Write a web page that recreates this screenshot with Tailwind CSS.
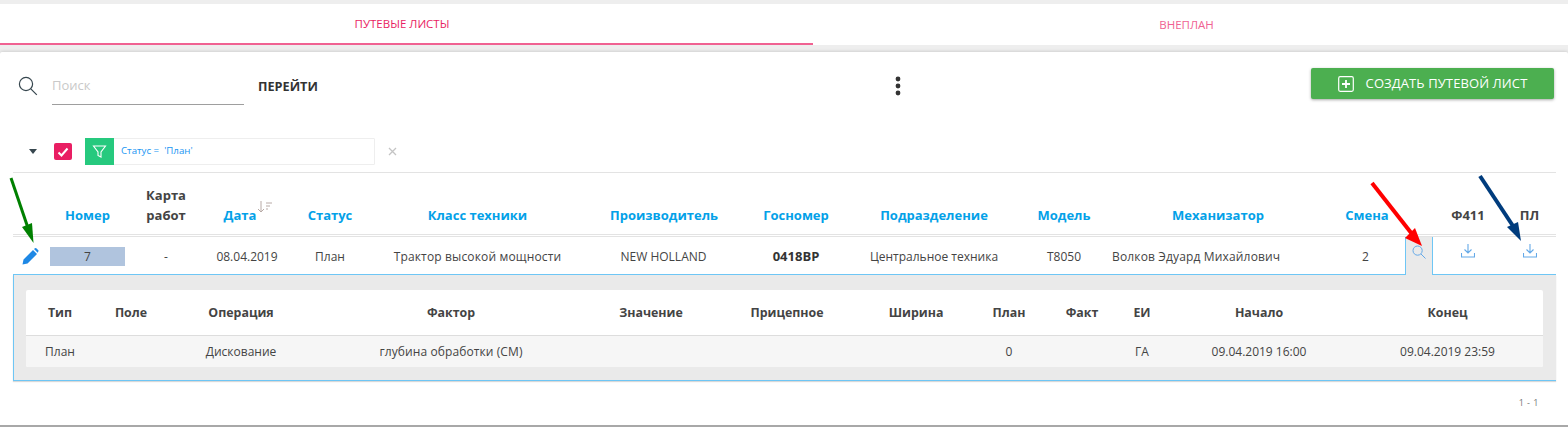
<!DOCTYPE html>
<html>
<head>
<meta charset="utf-8">
<script src="https://cdn.jsdelivr.net/npm/@tailwindcss/browser@4"></script>
</head>
<body class="bg-white">
<div class="relative h-[427px] w-[1568px] overflow-hidden bg-[#eeeeee] font-['Open_Sans',sans-serif] text-[12px] text-[#444444]">
  <div class="mt-[4px] flex h-[41px] bg-white text-[11.5px]">
    <div class="flex w-[813px] items-center justify-center border-b-2 border-[#f06292] pr-[9px] text-[#e91e63]">ПУТЕВЫЕ ЛИСТЫ</div>
    <div class="flex flex-1 items-center justify-center pr-[8px] pt-[1px] text-[#f06292]">ВНЕПЛАН</div>
  </div>
  <div class="mt-[7px] h-[375px] rounded-t-[2px] border-b-2 border-[#a8a8a8] bg-white pl-[13px] pr-[12px] shadow-[0_-1px_3px_rgba(0,0,0,0.12)]">
    <div class="flex h-[85px] items-start">
      <svg class="ml-[5px] mt-[24px] h-[20px] w-[20px]" viewBox="0 0 20 20" fill="none" stroke="#37474f" stroke-width="1.2"><circle cx="8" cy="8" r="6.6"/><path d="M12.8 12.8l6 6"/></svg>
      <div class="ml-[14px] mt-[16px] flex h-[37px] w-[192px] items-center border-b border-[#9e9e9e] pb-[1px] text-[13px] text-[#c9c9c9]">Поиск</div>
      <div class="ml-[14px] mt-[25px] w-[59px] whitespace-nowrap text-[12.7px] font-bold leading-[18px] text-[#333333]">ПЕРЕЙТИ</div>
      <svg class="ml-[578px] mt-[24px] h-[20px] w-[6px]" viewBox="0 0 6 20" fill="#333333"><circle cx="3" cy="3" r="2.4"/><circle cx="3" cy="10" r="2.4"/><circle cx="3" cy="17" r="2.4"/></svg>
      <div class="ml-[410px] mt-[16px] flex h-[31px] w-[243px] items-center justify-center gap-[12px] rounded-[2px] bg-[#4caf50] text-[13px] font-medium tracking-[0.1px] text-white shadow-[0_1px_3px_rgba(0,0,0,0.35)]">
        <svg class="h-[16px] w-[16px]" viewBox="0 0 16 16" fill="none" stroke="#ffffff"><rect x="0.7" y="0.7" width="14.6" height="14.6" rx="1.5" stroke-width="1.2"/><path d="M8 4v8M4 8h8" stroke-width="1.8"/></svg>
        <span>СОЗДАТЬ ПУТЕВОЙ ЛИСТ</span>
      </div>
    </div>
    <div class="flex h-[36px] items-center border-b border-[#e3e3e3] pb-[6px]">
      <div class="ml-[16px] h-0 w-0 border-x-[4px] border-t-[5px] border-x-transparent border-t-[#37474f]"></div>
      <div class="ml-[17px] flex h-[17px] w-[18px] items-center justify-center rounded-[2px] bg-[#e91e63]">
        <svg class="h-[12px] w-[12px]" viewBox="0 0 12 12" fill="none" stroke="#ffffff" stroke-width="2"><path d="M1.5 6.5l3 3 6-7"/></svg>
      </div>
      <div class="ml-[13px] flex h-[27px] w-[290px] items-center rounded-[1px] border border-[#eeeeee]">
        <div class="ml-[-1px] flex h-[27px] w-[29px] items-center justify-center bg-[#26c97e]">
          <svg class="h-[15px] w-[15px]" viewBox="0 0 15 15" fill="none" stroke="#ffffff" stroke-width="1.1"><path d="M1.5 2h12L9 8v5l-3-1.5V8z"/></svg>
        </div>
        <span class="ml-[7px] whitespace-pre text-[9.7px] text-[#2196f3]">Статус =  'План'</span>
      </div>
      <svg class="ml-[13px] h-[9px] w-[9px]" viewBox="0 0 9 9" stroke="#c4c4c4" stroke-width="1.3"><path d="M1 1l7 7M8 1l-7 7"/></svg>
    </div>
    <div class="grid h-[62px] grid-cols-[37px_75px_82px_80px_86px_209px_162px_104px_172px_88px_218px_79px_28px_70px_53px] items-end border-b border-[#e3e3e3] pb-[9px] text-center text-[13px] font-bold leading-[20px] text-[#03a1e8]">
      <div></div>
      <div>Номер</div>
      <div class="text-[#444444]">Карта<br>работ</div>
      <div class="relative"><span class="mr-[14px]">Дата</span><svg class="absolute left-[50px] top-[-5px] h-[14px] w-[16px]" viewBox="0 0 16 14" fill="none" stroke="#b8aaa6" stroke-width="1"><path d="M4 1v11M1 9l3 3 3-3M9 3h6M9 6h4M9 9h2"/></svg></div>
      <div>Статус</div>
      <div>Класс техники</div>
      <div class="pl-[2px]">Производитель</div>
      <div>Госномер</div>
      <div>Подразделение</div>
      <div>Модель</div>
      <div class="pl-[2px]">Механизатор</div>
      <div class="pl-[3px]">Смена</div>
      <div></div>
      <div class="text-[#444444]">Ф411</div>
      <div class="text-[#444444]">ПЛ</div>
    </div>
    <div class="mt-[1px] flex h-[39px] border-t border-[#e3e3e3] text-center text-[12px]">
      <div class="grid w-[1392px] grid-cols-[37px_75px_82px_80px_86px_209px_162px_104px_172px_88px_218px_79px] items-center border-b border-[#6ec6f5] pt-[2px]">
        <div class="mt-[-1px] flex items-center"><svg class="ml-[9px] h-[17px] w-[17px]" viewBox="0 0 17 17" fill="#1e88e5"><path d="M0.5 16.500l1-5L11 2l4 4-9.500 9.500zM12 1l1-0.800q0.700-0.400 1.300 0l2 2q0.500 0.600 0 1.300L15.700 4.800z"/></svg></div>
        <div class="mt-[-1px] flex h-[19px] items-center justify-center bg-[#b0c4de] pt-[1px]">7</div>
        <div>-</div>
        <div>08.04.2019</div>
        <div>План</div>
        <div class="tracking-[0.15px]">Трактор высокой мощности</div>
        <div class="pl-[1px]">NEW HOLLAND</div>
        <div class="text-[13px] font-bold text-[#333333]">0418ВР</div>
        <div>Центральное техника</div>
        <div>Т8050</div>
        <div class="pl-[4px] text-left tracking-[0.15px]">Волков Эдуард Михайлович</div>
        <div>2</div>
      </div>
      <div class="flex w-[28px] items-start justify-center border-x border-[#6ec6f5] bg-[#eaeaea] pt-[8px]">
        <svg class="h-[14px] w-[14px]" viewBox="0 0 14 14" fill="none" stroke="#64a9e8" stroke-width="1"><circle cx="5.600" cy="5.600" r="4.600"/><path d="M9 9l4.500 4.500"/></svg>
      </div>
      <div class="flex flex-1 border-b border-[#6ec6f5]">
        <div class="flex w-[70px] items-start justify-center pt-[7px]"><svg class="h-[14px] w-[14px]" viewBox="0 0 14 14" fill="none" stroke="#64a9e8" stroke-width="1.1"><path d="M7 0v9M3.500 5.500L7 9l3.500-3.500M0.500 9v4h13V9"/></svg></div>
        <div class="flex w-[53px] items-start justify-center pt-[7px]"><svg class="h-[14px] w-[14px]" viewBox="0 0 14 14" fill="none" stroke="#64a9e8" stroke-width="1.1"><path d="M7 0v9M3.500 5.500L7 9l3.500-3.500M0.500 9v4h13V9"/></svg></div>
      </div>
    </div>
    <div class="h-[106px] border-b border-l border-[#6ec6f5] bg-[#eaeaea] pl-[12px] pr-[13px] pt-[15px] shadow-[0_1px_1px_rgba(0,0,0,0.15)]">
      <div class="overflow-hidden rounded-[2px] bg-white text-center">
        <div class="grid h-[46px] grid-cols-[68px_74px_146px_274px_126px_146px_112px_74px_72px_48px_186px_191px] items-center border-b border-[#dddddd] pt-[1px] text-[12.4px] font-bold text-[#444444]">
          <div>Тип</div><div>Поле</div><div>Операция</div><div>Фактор</div><div>Значение</div><div>Прицепное</div><div>Ширина</div><div>План</div><div>Факт</div><div>ЕИ</div><div>Начало</div><div>Конец</div>
        </div>
        <div class="grid h-[31px] grid-cols-[68px_74px_146px_274px_126px_146px_112px_74px_72px_48px_186px_191px] items-center bg-[#f6f6f6] pt-[1px] text-[12px]">
          <div>План</div><div></div><div>Дискование</div><div class="tracking-[0.1px]">глубина обработки (СМ)</div><div></div><div></div><div></div><div>0</div><div></div><div>ГА</div><div>09.04.2019 16:00</div><div>09.04.2019 23:59</div>
        </div>
      </div>
    </div>
    <div class="pr-[17px] pt-[15px] text-right text-[9px] tracking-[0.5px] text-[#777777]">1 - 1</div>
  </div>
  <svg class="absolute left-0 top-0 h-[427px] w-[1568px]" viewBox="0 0 1568 427" fill="none">
    <path d="M11 178L28 228" stroke="#008000" stroke-width="3"/><path d="M22 227L32 223L33.500 243z" fill="#008000"/>
    <path d="M1372 183L1412 234" stroke="#ff0000" stroke-width="4"/><path d="M1405 238L1415 228L1422 246z" fill="#ff0000"/>
    <path d="M1480 176L1513 226" stroke="#003c7d" stroke-width="4"/><path d="M1507 227L1518 222L1521 241z" fill="#003c7d"/>
  </svg>
</div>
</body>
</html>
